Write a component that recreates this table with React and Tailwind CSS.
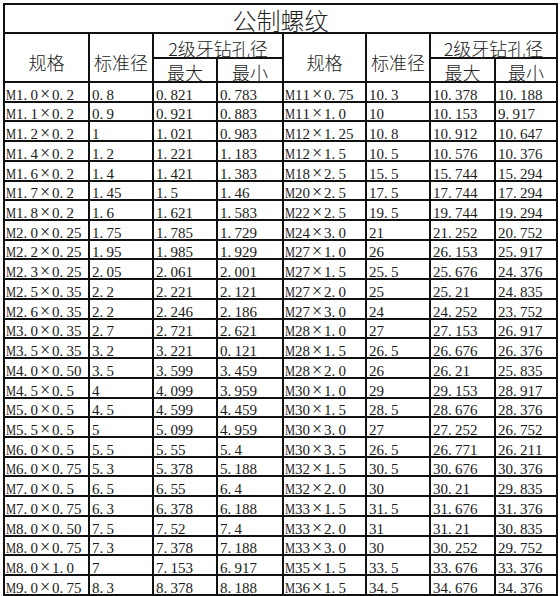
const left = [
  ["M1.0×0.2", "0.8", "0.821", "0.783"],
  ["M1.1×0.2", "0.9", "0.921", "0.883"],
  ["M1.2×0.2", "1", "1.021", "0.983"],
  ["M1.4×0.2", "1.2", "1.221", "1.183"],
  ["M1.6×0.2", "1.4", "1.421", "1.383"],
  ["M1.7×0.2", "1.45", "1.5", "1.46"],
  ["M1.8×0.2", "1.6", "1.621", "1.583"],
  ["M2.0×0.25", "1.75", "1.785", "1.729"],
  ["M2.2×0.25", "1.95", "1.985", "1.929"],
  ["M2.3×0.25", "2.05", "2.061", "2.001"],
  ["M2.5×0.35", "2.2", "2.221", "2.121"],
  ["M2.6×0.35", "2.2", "2.246", "2.186"],
  ["M3.0×0.35", "2.7", "2.721", "2.621"],
  ["M3.5×0.35", "3.2", "3.221", "0.121"],
  ["M4.0×0.50", "3.5", "3.599", "3.459"],
  ["M4.5×0.5", "4", "4.099", "3.959"],
  ["M5.0×0.5", "4.5", "4.599", "4.459"],
  ["M5.5×0.5", "5", "5.099", "4.959"],
  ["M6.0×0.5", "5.5", "5.55", "5.4"],
  ["M6.0×0.75", "5.3", "5.378", "5.188"],
  ["M7.0×0.5", "6.5", "6.55", "6.4"],
  ["M7.0×0.75", "6.3", "6.378", "6.188"],
  ["M8.0×0.50", "7.5", "7.52", "7.4"],
  ["M8.0×0.75", "7.3", "7.378", "7.188"],
  ["M8.0×1.0", "7", "7.153", "6.917"],
  ["M9.0×0.75", "8.3", "8.378", "8.188"],
];

const right = [
  ["M11×0.75", "10.3", "10.378", "10.188"],
  ["M11×1.0", "10", "10.153", "9.917"],
  ["M12×1.25", "10.8", "10.912", "10.647"],
  ["M12×1.5", "10.5", "10.576", "10.376"],
  ["M18×2.5", "15.5", "15.744", "15.294"],
  ["M20×2.5", "17.5", "17.744", "17.294"],
  ["M22×2.5", "19.5", "19.744", "19.294"],
  ["M24×3.0", "21", "21.252", "20.752"],
  ["M27×1.0", "26", "26.153", "25.917"],
  ["M27×1.5", "25.5", "25.676", "24.376"],
  ["M27×2.0", "25", "25.21", "24.835"],
  ["M27×3.0", "24", "24.252", "23.752"],
  ["M28×1.0", "27", "27.153", "26.917"],
  ["M28×1.5", "26.5", "26.676", "26.376"],
  ["M28×2.0", "26", "26.21", "25.835"],
  ["M30×1.0", "29", "29.153", "28.917"],
  ["M30×1.5", "28.5", "28.676", "28.376"],
  ["M30×3.0", "27", "27.252", "26.752"],
  ["M30×3.5", "26.5", "26.771", "26.211"],
  ["M32×1.5", "30.5", "30.676", "30.376"],
  ["M32×2.0", "30", "30.21", "29.835"],
  ["M33×1.5", "31.5", "31.676", "31.376"],
  ["M33×2.0", "31", "31.21", "30.835"],
  ["M33×3.0", "30", "30.252", "29.752"],
  ["M35×1.5", "33.5", "33.676", "33.376"],
  ["M36×1.5", "34.5", "34.676", "34.376"],
];

// fixed-width glyph boxes, like the SimSun cells in the sheet
function Mono({ text }) {
  return text.split("").map((c, i) => {
    if (c === "×")
      return (
        <span key={i} className="inline-block w-[14px] text-center text-[18px]">
          ×
        </span>
      );
    if (c === "M")
      return (
        <span key={i} className="inline-block w-[10px] origin-left scale-x-[0.75]">
          M
        </span>
      );
    if (c === ".")
      return (
        <span key={i} className="inline-block w-[7px]">
          .
        </span>
      );
    return (
      <span key={i} className="inline-block w-[7.5px]">
        {c}
      </span>
    );
  });
}

function Cell({ text, first }) {
  return (
    <div
      className={`flex items-end whitespace-nowrap bg-white text-[15px] leading-[12px] text-[#1c1c1c] ${
        first ? "pl-[1px]" : "pl-[2px]"
      }`}
    >
      <span>
        <Mono text={text} />
      </span>
    </div>
  );
}

function HeadGroup() {
  return (
    <>
      <div className="row-span-2 flex items-center justify-center bg-white pt-[8px] text-[18px] leading-none">
        规格
      </div>
      <div className="row-span-2 flex items-center justify-center bg-white pt-[8px] text-[18px] leading-none">
        标准径
      </div>
      <div className="col-span-2 flex items-end justify-center bg-white text-[18px] leading-none">
        2级牙钻孔径
      </div>
    </>
  );
}

function Sub({ text }) {
  return (
    <div className="flex items-end justify-center bg-white text-[18px] leading-none">
      {text}
    </div>
  );
}

export default function App() {
  return (
    <div className="min-h-screen bg-white">
      <div className="ml-[3px] mt-[3px] grid w-fit grid-cols-[83px_62px_62px_64px_81px_62px_63px_60px] grid-rows-[27px_23px_22px_repeat(26,17.73px)] gap-[2px] bg-[#111] p-[2px] font-['Noto_Sans_CJK_SC',sans-serif] font-light text-[#222]">
        <div className="col-span-8 flex items-end justify-center bg-white text-[24px] leading-none">
          公制螺纹
        </div>
        <HeadGroup />
        <HeadGroup />
        <Sub text="最大" />
        <Sub text="最小" />
        <Sub text="最大" />
        <Sub text="最小" />
        {left.map((row, r) => (
          <div key={r} className="contents font-['Liberation_Serif',serif] font-normal">
            {row.map((v, i) => (
              <Cell key={"l" + i} text={v} first={i === 0} />
            ))}
            {right[r].map((v, i) => (
              <Cell key={"r" + i} text={v} first={i === 0} />
            ))}
          </div>
        ))}
      </div>
    </div>
  );
}
